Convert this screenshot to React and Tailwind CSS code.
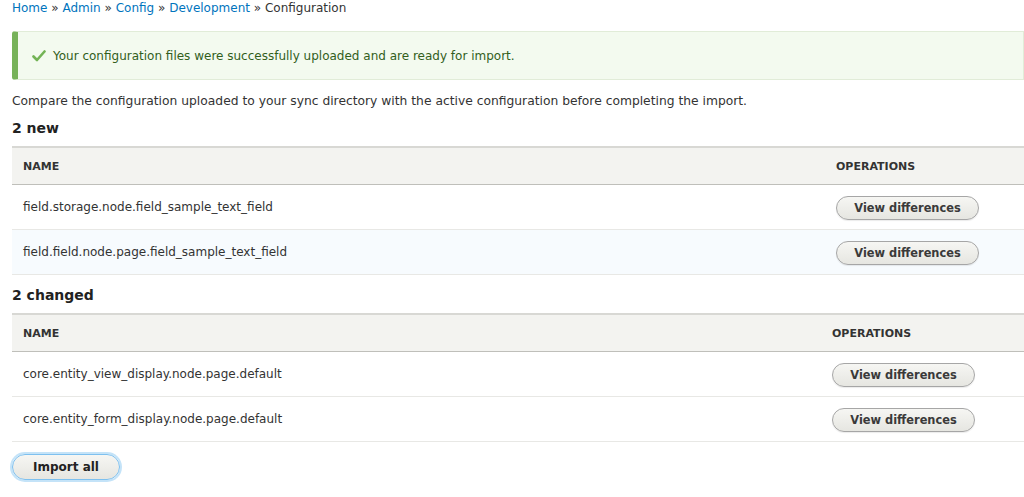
const newItems = [
  "field.storage.node.field_sample_text_field",
  "field.field.node.page.field_sample_text_field",
];

const changedItems = [
  "core.entity_view_display.node.page.default",
  "core.entity_form_display.node.page.default",
];

function ViewButton() {
  return (
    <button className="h-6 w-[143px] rounded-full border border-[#a6a6a6] bg-gradient-to-b from-[#f6f6f3] to-[#e6e6e1] text-[11.4px] font-bold text-[#3a3a3a] shadow-[0_1px_1px_rgba(0,0,0,0.08)]">
      View differences
    </button>
  );
}

function ConfigTable({ items, cols, striped }) {
  return (
    <div className="w-full">
      <div className={`grid ${cols} h-[39px] items-center border-t-2 border-b border-t-[#d8d8d4] border-b-[#bfbfba] bg-[#f3f3f0] text-[11px] font-bold uppercase text-[#333]`}>
        <div className="pl-[11px] pt-px">Name</div>
        <div className="pl-3 pt-px">Operations</div>
      </div>
      {items.map((item, i) => (
        <div
          key={item}
          className={`grid ${cols} h-[45px] items-center border-b border-[#e8e8e5] ${
            i === 1 && striped ? "bg-[#f7fbfe]" : "bg-white"
          }`}
        >
          <div className="pl-[11px] text-[12px] text-[#333]">{item}</div>
          <div className="pl-3">
            <ViewButton />
          </div>
        </div>
      ))}
    </div>
  );
}

export default function App() {
  return (
    <div className="h-[497px] overflow-hidden bg-white pl-3 font-['DejaVu_Sans',sans-serif] text-[#333]">
      <div className="pt-px text-[12px] leading-[14px] text-[#333]">
        <a className="text-[#0074bd]">Home</a> »{" "}
        <a className="text-[#0074bd]">Admin</a> »{" "}
        <a className="text-[#0074bd]">Config</a> »{" "}
        <a className="text-[#0074bd]">Development</a> » Configuration
      </div>

      <div className="mt-4 flex h-[49px] items-center rounded-l-[3px] border border-l-[6px] border-[#e1ecd8] border-l-[#77b259] bg-[#f3faef] pl-[14px] text-[12px] text-[#325e1c]">
        <svg width="14" height="12" viewBox="0 0 14 12" className="mr-[7px]">
          <path d="M1.5 6.5 L5 10 L12.5 1.5" fill="none" stroke="#73b355" strokeWidth="2.6" strokeLinecap="round" strokeLinejoin="round" />
        </svg>
        Your configuration files were successfully uploaded and are ready for import.
      </div>

      <p className="mt-[12px] text-[12.3px] text-[#333]">
        Compare the configuration uploaded to your sync directory with the active configuration before completing the import.
      </p>

      <h2 className="mt-[9px] text-[14px] font-bold leading-[18px] text-[#222]">2 new</h2>
      <div className="mt-[9px]">
        <ConfigTable items={newItems} cols="grid-cols-[812px_1fr]" striped />
      </div>

      <h2 className="mt-[11px] text-[14px] font-bold leading-[18px] text-[#222]">2 changed</h2>
      <div className="mt-[9px]">
        <ConfigTable items={changedItems} cols="grid-cols-[808px_1fr]" />
      </div>

      <button className="mt-[12px] h-[26px] w-[108px] rounded-full border border-[#7dc0ef] bg-gradient-to-b from-[#f6f6f3] to-[#e6e6e1] text-[12px] font-bold text-[#222] shadow-[0_0_0_2px_rgba(125,192,239,0.45)]">
        Import all
      </button>
    </div>
  );
}
